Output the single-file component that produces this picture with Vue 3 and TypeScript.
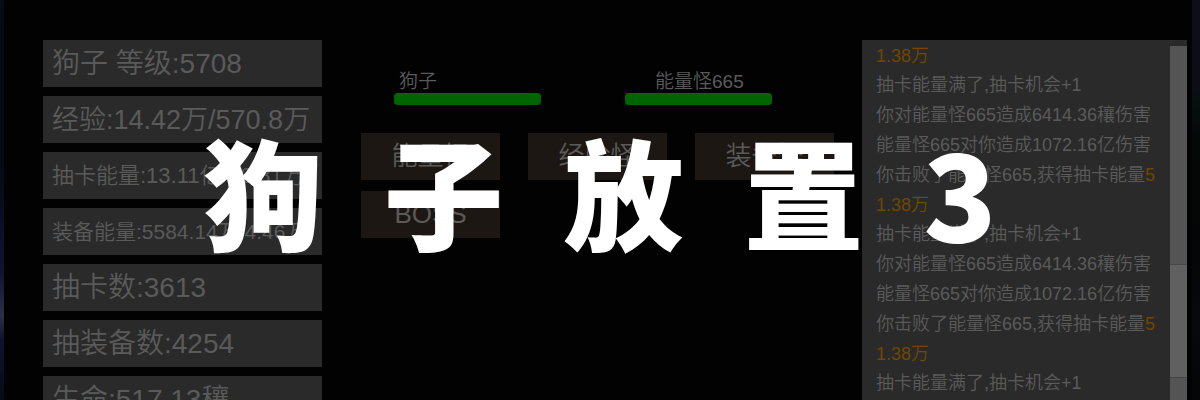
<script setup lang="ts">
interface Stat {
  label: string
  value: string
  size?: 'long' | 'mid' | 'small'
}

interface LogLine {
  text: string
  gain?: string
}

const stats: Stat[] = [
  { label: '狗子 等级', value: '5708' },
  { label: '经验', value: '14.42万/570.8万', size: 'long' },
  { label: '抽卡能量', value: '13.11亿/16.81万', size: 'mid' },
  { label: '装备能量', value: '5584.14万/4.46万', size: 'small' },
  { label: '抽卡数', value: '3613' },
  { label: '抽装备数', value: '4254' },
  { label: '生命', value: '517.13穰' },
]

const fighters: { name: string; hp: number; side: string }[] = [
  { name: '狗子', hp: 100, side: 'hero' },
  { name: '能量怪665', hp: 100, side: 'enemy' },
]

const targets: string[] = ['能量怪', '经验怪', '装备怪', 'BOSS']

const round: LogLine[] = [
  { text: '抽卡能量满了,抽卡机会+1' },
  { text: '你对能量怪665造成6414.36穰伤害' },
  { text: '能量怪665对你造成1072.16亿伤害' },
  { text: '你击败了能量怪665,获得抽卡能量', gain: '51.38万' },
]

const log: LogLine[] = [{ text: '', gain: '1.38万' }, ...round, ...round, round[0]]

const title: string[] = ['狗', '子', '放', '置', '3']
</script>

<template>
  <div class="scene">
    <main class="game">
      <section class="stats">
        <div v-for="stat in stats" :key="stat.label" class="stat" :class="stat.size">
          {{ stat.label }}:{{ stat.value }}
        </div>
      </section>

      <section class="arena">
        <div class="fighters">
          <div v-for="f in fighters" :key="f.name" class="fighter" :class="f.side">
            <span class="name">{{ f.name }}</span>
            <div class="track"><div class="hp" :style="{ width: f.hp + '%' }"></div></div>
          </div>
        </div>
        <div class="targets">
          <button v-for="t in targets" :key="t" type="button">{{ t }}</button>
        </div>
      </section>

      <section class="log">
        <div class="lines">
          <p v-for="(line, i) in log" :key="i" :class="{ reward: line.gain }">{{ line.text }}<em v-if="line.gain">{{ line.gain }}</em></p>
        </div>
        <div class="scroll"><div class="thumb"></div></div>
      </section>
    </main>
    <h1 class="title"><span v-for="c in title" :key="c">{{ c }}</span></h1>
  </div>
</template>

<style>
body {
  margin: 0;
  background: #020202;
}
</style>

<style scoped>
.scene {
  position: relative;
  height: 100vh;
  overflow: hidden;
  background:
    linear-gradient(#0d0e17, #0c0d15 23%, #06100f 25%, #040807 36%, #040506 60%, #07090e 80%, #040507) right / 8px 100% no-repeat,
    linear-gradient(#060c14, #060a12 40%, #090f24 55%, #0d1530 68%, #2a3146 79%, #0d132a 85%, #070b18) left / 4px 100% no-repeat;
  color: #5a5a5a;
  font-family: "Liberation Sans", "Noto Sans CJK SC", sans-serif;
  font-weight: 350;
}

.game {
  display: grid;
  grid-template-columns: minmax(0, 279fr) minmax(0, 540fr) minmax(0, 325fr);
  height: 100%;
  box-sizing: border-box;
  margin: 0 8px 0 4px;
  padding: 40px 5px 0 39px;
  background: #020202;
}

.stats {
  display: flex;
  flex-direction: column;
  gap: 9px;
}

.stat {
  flex: none;
  height: 47px;
  padding-left: 9px;
  background: #2a2a2a;
  font-size: 28px;
  line-height: 48px;
  white-space: nowrap;
}

.stat.long {
  font-size: 27px;
}

.stat.mid {
  font-size: 22px;
}

.stat.small {
  font-size: 21px;
}

.arena {
  padding: 30px 0 0 39px;
}

.fighters {
  display: flex;
  gap: 84px;
  padding-left: 33px;
}

.fighter {
  width: 147px;
}

.name {
  display: block;
  padding-left: 5px;
  font-size: 19px;
  line-height: 23px;
}

.enemy .name {
  padding-left: 30px;
}

.track {
  height: 12px;
  border-radius: 3px;
  overflow: hidden;
}

.hp {
  height: 100%;
  border-radius: 3px;
  background: #006400;
}

.targets {
  display: grid;
  grid-template-columns: repeat(3, 139px);
  gap: 11px 28px;
  padding-top: 28px;
}

button {
  height: 47px;
  padding: 0;
  border: 0;
  background: #1c1712;
  color: inherit;
  font: inherit;
  font-size: 26px;
  line-height: 47px;
}

.log {
  display: flex;
  overflow: hidden;
  background: #2a2a2a;
}

.lines {
  flex: 1;
  padding: 1px 8px 0 14px;
}

p {
  margin: 0;
  font-size: 18px;
  line-height: 30px;
  word-break: break-all;
}

.reward {
  margin-bottom: -1px;
}

em {
  color: #704600;
  font-style: normal;
}

.scroll {
  width: 17px;
  margin-top: 6px;
  padding-top: 218px;
  background: #545454;
}

.thumb {
  height: 112px;
  border-top: 1px solid #484848;
  border-bottom: 1px solid #444;
  background: #606060;
}

.title {
  position: absolute;
  inset: 0;
  display: flex;
  align-items: center;
  justify-content: center;
  gap: 60px;
  margin: 0;
  padding-bottom: 20px;
  color: #fff;
  font-family: "Noto Sans CJK SC", sans-serif;
  font-size: 120px;
  font-weight: 900;
  line-height: 1;
  pointer-events: none;
}
</style>
